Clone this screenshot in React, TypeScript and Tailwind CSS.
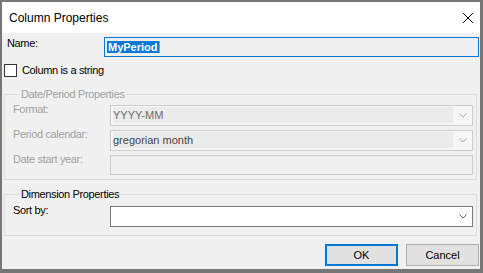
import React from "react";

const Chevron = ({ color }: { color: string }) => (
  <svg width="8" height="5" viewBox="0 0 8 5" className="block">
    <polyline points="0.5,0.5 4,4 7.5,0.5" fill="none" stroke={color} strokeWidth="1" />
  </svg>
);

export default function App() {
  const font = { fontFamily: '"Liberation Sans", Arial, sans-serif' };
  return (
    <div
      className="w-[483px] h-[273px] bg-[#f0f0f0] border-t-2 border-l-2 border-r-[3px] border-b-[4px] border-[#767676] flex flex-col text-[11px] leading-[13px] text-black tracking-[-0.35px] overflow-hidden"
      style={font}
    >
      {/* Title bar */}
      <div className="h-[31px] bg-white flex items-center justify-between pl-[7px] pr-[7px] shrink-0">
        <span className="text-[12px] leading-[14px] tracking-normal text-black">Column Properties</span>
        <svg width="10" height="10" viewBox="0 0 10 10" className="block">
          <line x1="0" y1="0" x2="10" y2="10" stroke="#000" strokeWidth="1" />
          <line x1="10" y1="0" x2="0" y2="10" stroke="#000" strokeWidth="1" />
        </svg>
      </div>

      {/* Name row */}
      <div className="mt-[4px] h-[20px] flex items-start shrink-0">
        <span className="w-[102px] pl-[5px]">Name:</span>
        <div className="flex-1 mr-[1px] h-[20px] border border-[#0078d7] bg-[#f0f0f0] flex items-center pl-[2px]">
          <span className="bg-[#0078d7] text-white font-bold tracking-normal leading-[12px] px-[1px]">MyPeriod</span>
          <span className="w-[1px] h-[12px] bg-[#f08a3c]" />
        </div>
      </div>

      {/* Checkbox row */}
      <div className="mt-[7px] h-[13px] flex items-center shrink-0 pl-[2px]">
        <span className="w-[13px] h-[13px] border border-[#333333] bg-white shrink-0" />
        <span className="ml-[5px]">Column is a string</span>
      </div>

      {/* Date/Period group */}
      <fieldset className="mt-[11px] ml-[2px] mr-[3px] border border-[#dcdcdc] pl-[8px] pr-[3px] pt-[4px] pb-[4px] shrink-0">
        <legend className="ml-[7px] px-[1px] text-[#a0a0a0] leading-[13px]">Date/Period Properties</legend>
        <div className="flex flex-col gap-[4px]">
          <div className="flex items-start h-[21px]">
            <span className="w-[97px] -mt-[2px] text-[#a0a0a0]">Format:</span>
            <div className="flex-1 h-[21px] border border-[#cccccc] bg-[#f6f6f6] flex">
              <div className="flex-1 ml-[2px] mt-[1px] mb-[2px] bg-[#ebebeb] flex items-center text-[#6d6d6d] tracking-normal">
                YYYY-MM
              </div>
              <div className="w-[19px] flex items-center justify-center">
                <Chevron color="#a8a8a8" />
              </div>
            </div>
          </div>
          <div className="flex items-start h-[21px]">
            <span className="w-[97px] -mt-[2px] text-[#a0a0a0]">Period calendar:</span>
            <div className="flex-1 h-[21px] border border-[#cccccc] bg-[#f6f6f6] flex">
              <div className="flex-1 ml-[2px] mt-[1px] mb-[2px] bg-[#ebebeb] flex items-center text-[#444444] tracking-normal">
                gregorian month
              </div>
              <div className="w-[19px] flex items-center justify-center">
                <Chevron color="#a8a8a8" />
              </div>
            </div>
          </div>
          <div className="flex items-start h-[20px]">
            <span className="w-[97px] -mt-[2px] text-[#a0a0a0]">Date start year:</span>
            <div className="flex-1 h-[20px] border border-[#cccccc] bg-[#f0f0f0]" />
          </div>
        </div>
      </fieldset>

      {/* Dimension group */}
      <fieldset className="mt-[8px] ml-[2px] mr-[3px] border border-[#dcdcdc] pl-[8px] pr-[3px] pt-[5px] pb-[8px] shrink-0">
        <legend className="ml-[7px] px-[1px] leading-[13px]">Dimension Properties</legend>
        <div className="flex items-start h-[21px]">
          <span className="w-[97px] -mt-[2px]">Sort by:</span>
          <div className="flex-1 h-[21px] border border-[#7a7a7a] bg-white flex justify-end">
            <div className="w-[19px] flex items-center justify-center">
              <Chevron color="#606060" />
            </div>
          </div>
        </div>
      </fieldset>

      {/* Buttons */}
      <div className="mt-[8px] flex justify-end gap-[8px] mr-[1px] shrink-0 tracking-normal">
        <button className="w-[73px] h-[22px] border-2 border-[#0078d7] bg-[#e1e1e1] flex items-center justify-center text-[11px] leading-[13px]">
          OK
        </button>
        <button className="w-[73px] h-[22px] border border-[#adadad] bg-[#e1e1e1] flex items-center justify-center text-[11px] leading-[13px]">
          Cancel
        </button>
      </div>
    </div>
  );
}
